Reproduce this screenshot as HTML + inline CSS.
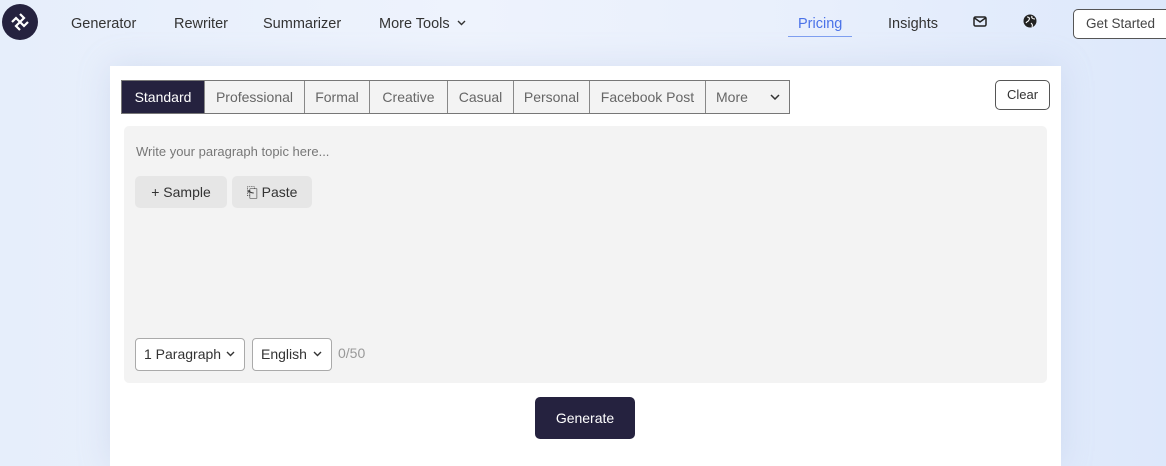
<!DOCTYPE html>
<html><head><meta charset="utf-8"><style>
*{box-sizing:border-box;margin:0;padding:0}
body{width:1166px;height:451px;overflow:hidden;font-family:"Liberation Sans",sans-serif;background:linear-gradient(90deg,#e6eefb 0%,#eef3fd 40%,#e8effc 70%,#dde8fb 100%);position:relative;color:#333;margin:0}
.a{position:absolute}
.nav{font-size:14.5px;color:#333;top:16px}
.card{left:110px;top:66px;width:951px;height:400px;background:#fff;box-shadow:0 0 30px rgba(150,170,210,.25)}
.tabs{left:121px;top:80px;height:34px;display:flex;border:1px solid #777;}
.tabs div{height:32px;line-height:32px;font-size:14px;color:#666;background:#f3f3f3;border-left:1px solid #888;text-align:center;position:relative;white-space:nowrap}
.tabs div:first-child{border-left:none;background:#25223f;color:#fff}
.btn{background:#e6e6e6;border-radius:5px;font-size:14px;color:#333;text-align:center;line-height:32px;height:32px}
.sel{border:1px solid #aaa;border-radius:4px;height:33px;line-height:31px;font-size:14px;color:#333;background:#fff;padding-left:8px}
</style></head><body>
<div class="a" style="left:2px;top:4px;width:36px;height:36px;border-radius:50%;background:#25223f"></div>
<svg class="a" style="left:9px;top:11px" width="22" height="22" viewBox="0 0 22 22" fill="none" stroke="#fff" stroke-width="2.2"><path d="M11 3l4 4-4 4M19 11l-4 4-4-4M11 19l-4-4 4-4M3 11l4-4 4 4"/></svg>
<div class="a nav" style="left:71px">Generator</div>
<div class="a nav" style="left:174px">Rewriter</div>
<div class="a nav" style="left:263px">Summarizer</div>
<div class="a nav" style="left:379px">More Tools</div>
<svg class="a" style="left:457px;top:20px" width="9" height="6" viewBox="0 0 9 6" fill="none" stroke="#333" stroke-width="1.4"><path d="M1 1l3.5 3.5L8 1"/></svg>
<div class="a nav" style="left:798px;color:#4a72e8">Pricing</div>
<div class="a" style="left:788px;top:36px;width:64px;height:1px;background:#7e9ef0"></div>
<div class="a nav" style="left:888px">Insights</div>
<svg class="a" style="left:973px;top:16px" width="14" height="11" viewBox="0 0 14 11" fill="none" stroke="#222" stroke-width="1.5"><rect x="1" y="1" width="12" height="9" rx="1.5"/><path d="M1.5 2l5.5 4 5.5-4"/></svg>
<svg class="a" style="left:1023px;top:14px" width="14" height="14" viewBox="0 0 14 14"><circle cx="7" cy="7" r="6.5" fill="#222"/><path d="M4 3c2 0 3 1 2 3s-2 1-3 3M9 2c-1 2 1 3 3 3M8 9c1 1 2 2 1 4" stroke="#fff" stroke-width="1.1" fill="none"/></svg>
<div class="a" style="left:1073px;top:9px;width:100px;height:30px;border:1px solid #555;border-radius:5px;background:#fff;font-size:13.5px;line-height:28px;padding-left:12px;color:#444">Get Started</div>
<div class="a card"></div>
<div class="a tabs">
<div style="width:82px">Standard</div><div style="width:100px">Professional</div><div style="width:65px">Formal</div><div style="width:78px">Creative</div><div style="width:66px">Casual</div><div style="width:76px">Personal</div><div style="width:116px">Facebook Post</div><div style="width:84px;text-align:left;padding-left:10px">More<svg style="position:absolute;left:64px;top:13px" width="10" height="6" viewBox="0 0 10 6" fill="none" stroke="#333" stroke-width="1.5"><path d="M1 1l4 4 4-4"/></svg></div>
</div>
<div class="a" style="left:995px;top:80px;width:55px;height:30px;border:1px solid #555;border-radius:5px;font-size:13px;line-height:28px;text-align:center;color:#333">Clear</div>
<div class="a" style="left:124px;top:126px;width:923px;height:257px;background:#f3f3f3;border-radius:5px"></div>
<div class="a" style="left:136px;top:144px;font-size:13px;color:#777">Write your paragraph topic here...</div>
<div class="a btn" style="left:135px;top:176px;width:92px">+ Sample</div>
<div class="a btn" style="left:232px;top:176px;width:80px">⎗ Paste</div>
<div class="a sel" style="left:135px;top:338px;width:110px">1 Paragraph</div>
<svg class="a" style="left:226px;top:351px" width="9" height="6" viewBox="0 0 9 6" fill="none" stroke="#333" stroke-width="1.4"><path d="M1 1l3.5 3.5L8 1"/></svg>
<div class="a sel" style="left:252px;top:338px;width:80px">English</div>
<svg class="a" style="left:313px;top:351px" width="9" height="6" viewBox="0 0 9 6" fill="none" stroke="#333" stroke-width="1.4"><path d="M1 1l3.5 3.5L8 1"/></svg>
<div class="a" style="left:338px;top:345px;font-size:14px;color:#999">0/50</div>
<div class="a" style="left:535px;top:397px;width:100px;height:42px;border-radius:5px;background:#25223f;color:#fff;font-size:14px;line-height:42px;text-align:center">Generate</div>
</body></html>
